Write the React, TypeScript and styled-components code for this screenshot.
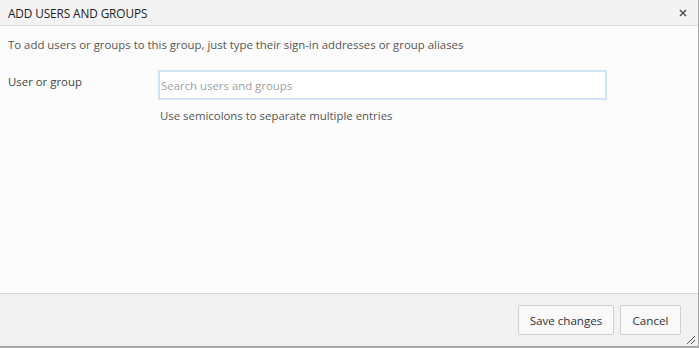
import * as React from 'react';
import styled, { createGlobalStyle } from 'styled-components';

const GlobalStyle = createGlobalStyle`
  html, body {
    margin: 0;
    padding: 0;
    background: #fcfcfc;
  }
  * {
    box-sizing: border-box;
  }
`;

const Dialog = styled.div`
  width: 699px;
  height: 348px;
  display: flex;
  flex-direction: column;
  background: #fcfcfc;
  border-right: 1px solid #a6a6a6;
  border-bottom: 2px solid #a6a6a6;
  font-family: 'Open Sans', 'Noto Sans', sans-serif;
  font-size: 11.4px;
  color: #444;
  position: relative;
`;

const Header = styled.div`
  height: 26px;
  display: flex;
  align-items: center;
  justify-content: space-between;
  padding: 0 9px 0 8px;
  background: #f3f3f3;
  border-bottom: 1px solid #dcdcdc;
`;

const Title = styled.span`
  font-size: 11.8px;
  color: #222;
  letter-spacing: -0.1px;
`;

const CloseButton = styled.button`
  border: none;
  background: none;
  padding: 0;
  width: 12px;
  height: 12px;
  display: inline-flex;
  align-items: center;
  justify-content: center;
  cursor: pointer;
`;

const Body = styled.div`
  flex: 1;
  padding: 11px 8px 0;
`;

const Intro = styled.p`
  margin: 0 0 18px;
  color: #555;
`;

const FieldRow = styled.div`
  display: grid;
  grid-template-columns: 150px 449px;
  align-items: start;
`;

const Label = styled.label`
  color: #444;
  padding-top: 4px;
`;

const FieldColumn = styled.div`
  display: flex;
  flex-direction: column;
`;

const SearchInput = styled.input`
  width: 449px;
  height: 30px;
  border: 2px solid #d2e3f4;
  background: #fff;
  padding: 0 1px;
  font-family: inherit;
  font-size: 11.4px;
  color: #333;
  outline: none;
  caret-color: #000;
  &::placeholder {
    color: #a0a0a0;
  }
`;

const Hint = styled.span`
  margin-top: 8px;
  padding-left: 2px;
  color: #555;
`;

const Footer = styled.div`
  height: 53px;
  display: flex;
  align-items: center;
  justify-content: flex-end;
  gap: 6px;
  padding: 0 17px 0 0;
  background: #f2f2f2;
  border-top: 1px solid #d6d6d6;
`;

const Button = styled.button<{ $wide?: boolean }>`
  height: 30px;
  width: ${(p) => (p.$wide ? '96px' : '61px')};
  padding: 0;
  border: 1px solid #cfcfcf;
  border-radius: 2px;
  background: #f9f9f9;
  font-family: inherit;
  font-size: 11.6px;
  color: #333;
  cursor: pointer;
`;

const Grip = styled.svg`
  position: absolute;
  right: 2px;
  bottom: 1px;
`;

export default function App() {
  const inputRef = React.useRef<HTMLInputElement>(null);

  React.useEffect(() => {
    inputRef.current?.focus();
  }, []);

  return (
    <>
      <GlobalStyle />
      <Dialog>
        <Header>
          <Title>ADD USERS AND GROUPS</Title>
          <CloseButton aria-label="Close">
            <svg width="8" height="8" viewBox="0 0 8 8">
              <path d="M1 1L7 7M7 1L1 7" stroke="#555" strokeWidth="1.6" />
            </svg>
          </CloseButton>
        </Header>
        <Body>
          <Intro>To add users or groups to this group, just type their sign-in addresses or group aliases</Intro>
          <FieldRow>
            <Label>User or group</Label>
            <FieldColumn>
              <SearchInput ref={inputRef} autoFocus placeholder="Search users and groups" />
              <Hint>Use semicolons to separate multiple entries</Hint>
            </FieldColumn>
          </FieldRow>
        </Body>
        <Footer>
          <Button $wide>Save changes</Button>
          <Button>Cancel</Button>
        </Footer>
        <Grip width="12" height="12" viewBox="0 0 12 12">
          <path d="M11 3L3 11M11 7L7 11" stroke="#555" strokeWidth="1" />
        </Grip>
      </Dialog>
    </>
  );
}
